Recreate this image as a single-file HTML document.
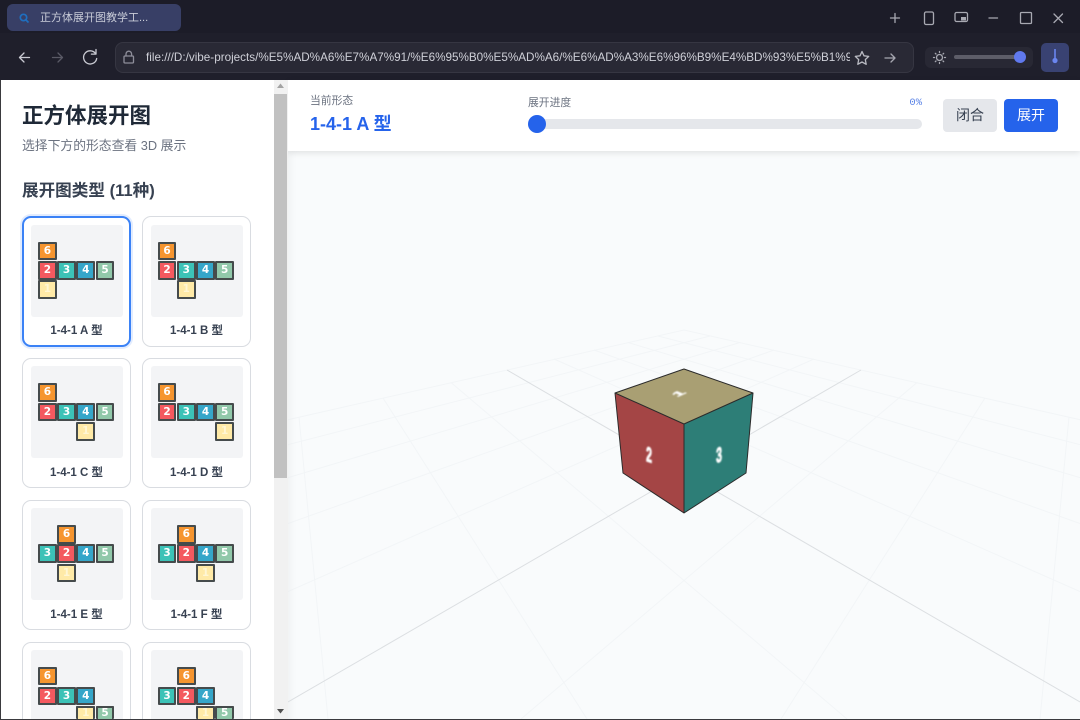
<!DOCTYPE html>
<html lang="zh">
<head>
<meta charset="utf-8">
<title>正方体展开图教学工具</title>
<style>
html,body{margin:0;padding:0;width:1080px;height:720px;overflow:hidden;background:#1c1c28;}
*{box-sizing:border-box;}
body{font-family:"Liberation Sans","Noto Sans CJK SC",sans-serif;position:relative;}
.abs{position:absolute;}
#tool{left:0;top:33px;width:1080px;height:47px;background:#1f1f2b;}
#tab{left:7px;top:4px;width:174px;height:27px;background:#383f66;border-radius:6px;}
#tabt{left:40px;top:10px;font-size:11px;line-height:16px;color:#c9ccd8;white-space:nowrap;}
#addr{left:115px;top:42px;width:799px;height:31px;background:#292935;border:1px solid #363642;border-radius:8px;}
#url{left:146px;top:50px;width:704px;height:16px;overflow:hidden;font-size:11.7px;line-height:16px;color:#cfd0d8;white-space:nowrap;}
#sl{left:925px;top:47px;width:108px;height:21px;background:#282834;border-radius:6px;}
#sltr{left:954px;top:55px;width:70px;height:4px;background:#5d5d68;border-radius:2px;}
#slth{left:1014px;top:51px;width:12px;height:12px;background:#6079ee;border-radius:50%;}
#ext{left:1041px;top:43px;width:28px;height:29px;background:#394272;border-radius:5px;}
#page{left:1px;top:80px;width:1079px;height:639px;background:#fff;overflow:hidden;}
#bar{left:274px;top:80px;width:14px;height:639px;background:#f1f1f1;}
#thumb{left:274px;top:94px;width:13px;height:384px;background:#c1c1c1;}
#cv{left:288px;top:151px;width:792px;height:568px;background:#f9fbfc;overflow:hidden;box-shadow:inset 8px 0 10px -8px rgba(0,0,0,.07);}
#top{left:288px;top:80px;width:792px;height:71px;background:#fff;box-shadow:0 2px 6px rgba(0,0,0,.10);}
h1{position:absolute;margin:0;left:22px;top:101px;font-size:21.5px;line-height:30px;font-weight:700;color:#1f2937;white-space:nowrap;}
#sub{left:22px;top:136px;font-size:12.8px;line-height:20px;color:#6b7280;white-space:nowrap;}
h2{position:absolute;margin:0;left:22px;top:179px;font-size:16.6px;line-height:24px;font-weight:700;color:#374151;white-space:nowrap;}
.card{position:absolute;width:109px;height:130px;border:1.5px solid #d9dce1;border-radius:9px;background:#fff;}
.card.on{border:2px solid #3b82f6;box-shadow:0 0 0 2px rgba(59,130,246,.15);}
.card.cut{height:77px;border-bottom:0;border-radius:9px 9px 0 0;}
.pv{position:absolute;width:92px;height:92px;background:#f3f4f6;border-radius:3px;}
.pv.cut{height:69px;border-radius:3px 3px 0 0;}
.lb{position:absolute;width:109px;text-align:center;font-size:11.5px;line-height:16px;font-weight:700;color:#374151;white-space:nowrap;}
.s{position:absolute;width:18.8px;height:18.8px;border:2px solid #454b4c;font:700 10.5px/15px "DejaVu Sans","Liberation Sans",sans-serif;color:#fff;text-align:center;border-radius:1px;overflow:hidden;}
.s.cut{height:13.2px;border-bottom:0;line-height:11px;}
.c1{background:#ffeaa7;color:#fff6d4;}
.c2{background:#f4595f;}
.c3{background:#3cc2b7;}
.c4{background:#35a6c9;}
.c5{background:#91c8aa;}
.c6{background:#f6952f;}
#cur{left:310px;top:93px;font-size:10.8px;line-height:16px;color:#6b7280;white-space:nowrap;}
#name{left:310px;top:112px;font-size:18px;line-height:24px;font-weight:700;color:#2563eb;white-space:nowrap;}
#prog{left:528px;top:95px;font-size:10.8px;line-height:16px;color:#6b7280;white-space:nowrap;}
#pct{left:902px;top:95px;width:20px;text-align:right;font-size:10.5px;line-height:16px;color:#5b84e6;font-family:"Liberation Mono",monospace;}
#tr{left:528px;top:119px;width:394px;height:10px;background:#e5e7eb;border-radius:5px;}
#kn{left:528px;top:115px;width:18px;height:18px;background:#2563eb;border-radius:50%;}
.btn{position:absolute;top:99px;width:54px;height:33px;border-radius:4px;font-size:14px;line-height:33px;text-align:center;}
#b1{left:943px;background:#e5e7eb;color:#374151;}
#b2{left:1004px;background:#2563eb;color:#fff;}
svg{position:absolute;display:block;}
</style>
</head>
<body>
<div class="abs" id="tool"></div>
<div class="abs" id="tab"></div>
<div class="abs" id="tabt">正方体展开图教学工...</div>
<div class="abs" id="addr"></div>
<div class="abs" id="url">file:///D:/vibe-projects/%E5%AD%A6%E7%A7%91/%E6%95%B0%E5%AD%A6/%E6%AD%A3%E6%96%B9%E4%BD%93%E5%B1%95%E5%BC%80%E5%9B%BE</div>
<div class="abs" id="sl"></div>
<div class="abs" id="sltr"></div>
<div class="abs" id="slth"></div>
<div class="abs" id="ext"></div>

<svg style="left:0;top:0" width="1080" height="80" viewBox="0 0 1080 80" fill="none">
  <g stroke="#1f6fc0" stroke-width="1.7"><circle cx="23.5" cy="17.5" r="3.2"/><path d="M26 20l2.5 2.5"/></g>
  <g stroke="#c9cad2" stroke-width="1.3" stroke-linecap="round" stroke-linejoin="round">
    <path d="M29.5 57.5H19.5M24 53l-4.5 4.5L24 62"/>
    <path d="M52.5 57.5H62.5M58 53l4.5 4.5L58 62" stroke="#5a5a66"/>
    <path d="M95.5 53.5a6.6 6.6 0 1 0 1.2 5"/><path d="M96 49.5v4.6h-4.6"/>
    <g stroke="#8e8e9a"><rect x="124" y="56" width="9.5" height="7" rx="1"/><path d="M126 56v-2a2.8 2.8 0 0 1 5.6 0v2"/></g>
    <path d="M862 51.5l2 4.3 4.7.6-3.4 3.2.9 4.7-4.2-2.3-4.2 2.3.9-4.7-3.4-3.2 4.7-.6z" stroke="#b9bac2"/>
    <path d="M885 58h10M891 54l4 4-4 4" stroke="#a6a7b0"/>
    <g stroke="#a6a7b0"><circle cx="939.5" cy="57.5" r="3"/><path d="M939.5 51.5v1M939.5 62.5v1M933.5 57.5h1M944.5 57.5h1M935.3 53.3l.7.7M943 61l.7.7M935.3 61.7l.7-.7M943 54l.7-.7"/></g>
    <g stroke="#a8a9b2">
      <path d="M890.5 18h9M895 13.5v9"/>
      <rect x="924.5" y="12" width="9" height="12.5" rx="1.5"/>
      <rect x="955" y="12.5" width="12.5" height="9" rx="1.5"/>
      <path d="M989 18h8.5"/>
      <rect x="1020.5" y="12.5" width="11" height="11" rx="1"/>
      <path d="M1054 14l8.5 8.5M1062.5 14l-8.5 8.5"/>
    </g>
  </g>
  <rect x="961" y="17" width="5" height="3.5" fill="#a8a9b2"/>
  <path d="M1055 49v10" stroke="#6b86f0" stroke-width="1.6"/>
  <circle cx="1055" cy="60.5" r="2.6" fill="#6b86f0"/>
</svg>

<div class="abs" id="page"></div>
<div class="abs" id="cv">
  <svg style="left:0;top:0" width="792" height="568" viewBox="288 151 792 568" fill="none">
    <g stroke="#e4e8ec" stroke-width="1" opacity=".3">
      <path d="M684 330L1080 419.7M658 336L1080 444.6M628 342.5L1080 477.7M594 350L1080 523.5M554 359L1080 591.6M451 382.5L847 719M383 398L587 719M299 417L328 719"/>
      <path d="M684 330L288 419.7M710 336L288 444.6M740 342.5L288 477.7M774 350L288 523.5M814 359L288 591.6M917 382.5L521 719M985 398L781 719M1069 417L1040 719"/>
    </g>
    <path d="M507 370L1080 702M861 370L288 702" stroke="#dcdfe2" stroke-width="1"/>
    <polygon points="684,369 753,393 684,424 615,393" fill="#a99f73"/>
    <polygon points="615,393 684,424 684,513 623,473" fill="#a44545"/>
    <polygon points="753,393 684,424 684,513 746,473" fill="#2d7e77"/>
    <path d="M684 369L753 393L746 473L684 513L623 473L615 393ZM615 393L684 424L753 393M684 424V513" stroke="#2b2b2b" stroke-width="1" stroke-linejoin="round"/>
    <g fill="#fff" stroke="#fff" stroke-width=".7" font-family="Liberation Sans, sans-serif" font-weight="700" font-size="14" text-anchor="middle" style="filter:blur(.8px)">
      <text transform="matrix(1.2 -.55 .7 .3 682 395)">1</text>
      <text transform="matrix(.75 .25 0 1.5 649 462)">2</text>
      <text transform="matrix(.75 -.25 0 1.5 719 462)">3</text>
    </g>
  </svg>
</div>
<div class="abs" id="top"></div>
<div class="abs" id="cur">当前形态</div>
<div class="abs" id="name">1-4-1 A 型</div>
<div class="abs" id="prog">展开进度</div>
<div class="abs" id="pct">0%</div>
<div class="abs" id="tr"></div>
<div class="abs" id="kn"></div>
<div class="btn" id="b1">闭合</div>
<div class="btn" id="b2">展开</div>

<div class="abs" id="bar"></div>
<div class="abs" id="thumb"></div>
<svg style="left:274px;top:80px" width="14" height="639" viewBox="0 0 14 639">
  <path d="M6.5 3.5L10 8H3z" fill="#a3a3a3"/>
  <path d="M3 629h7l-3.5 4.5z" fill="#505050"/>
</svg>

<h1>正方体展开图</h1>
<div class="abs" id="sub">选择下方的形态查看 3D 展示</div>
<h2>展开图类型 (11种)</h2>

<div style="position:absolute;left:0;top:0;width:274px;height:719px;overflow:hidden">
  <div class="card on" style="left:22px;top:216px;height:131px"></div>
  <div class="pv" style="left:31px;top:225px"></div>
  <div class="lb" style="left:22px;top:323px">1-4-1 A 型</div>
  <b class="s c6" style="left:38px;top:241.7px">6</b><b class="s c2" style="left:38px;top:261px">2</b><b class="s c3" style="left:57.2px;top:261px">3</b><b class="s c4" style="left:76.4px;top:261px">4</b><b class="s c5" style="left:95.6px;top:261px">5</b><b class="s c1" style="left:38px;top:280.3px">1</b>

  <div class="card" style="left:142px;top:216px;height:131px"></div>
  <div class="pv" style="left:151px;top:225px"></div>
  <div class="lb" style="left:142px;top:323px">1-4-1 B 型</div>
  <b class="s c6" style="left:157.7px;top:241.7px">6</b><b class="s c2" style="left:157.7px;top:261px">2</b><b class="s c3" style="left:176.9px;top:261px">3</b><b class="s c4" style="left:196.1px;top:261px">4</b><b class="s c5" style="left:215.3px;top:261px">5</b><b class="s c1" style="left:176.9px;top:280.3px">1</b>

  <div class="card" style="left:22px;top:358px"></div>
  <div class="pv" style="left:31px;top:366px"></div>
  <div class="lb" style="left:22px;top:465px">1-4-1 C 型</div>
  <b class="s c6" style="left:38px;top:383.3px">6</b><b class="s c2" style="left:38px;top:402.6px">2</b><b class="s c3" style="left:57.2px;top:402.6px">3</b><b class="s c4" style="left:76.4px;top:402.6px">4</b><b class="s c5" style="left:95.6px;top:402.6px">5</b><b class="s c1" style="left:76.4px;top:421.9px">1</b>

  <div class="card" style="left:142px;top:358px"></div>
  <div class="pv" style="left:151px;top:366px"></div>
  <div class="lb" style="left:142px;top:465px">1-4-1 D 型</div>
  <b class="s c6" style="left:157.7px;top:383.3px">6</b><b class="s c2" style="left:157.7px;top:402.6px">2</b><b class="s c3" style="left:176.9px;top:402.6px">3</b><b class="s c4" style="left:196.1px;top:402.6px">4</b><b class="s c5" style="left:215.3px;top:402.6px">5</b><b class="s c1" style="left:215.3px;top:421.9px">1</b>

  <div class="card" style="left:22px;top:500px"></div>
  <div class="pv" style="left:31px;top:508px"></div>
  <div class="lb" style="left:22px;top:607px">1-4-1 E 型</div>
  <b class="s c6" style="left:57.2px;top:525px">6</b><b class="s c3" style="left:38px;top:544.3px">3</b><b class="s c2" style="left:57.2px;top:544.3px">2</b><b class="s c4" style="left:76.4px;top:544.3px">4</b><b class="s c5" style="left:95.6px;top:544.3px">5</b><b class="s c1" style="left:57.2px;top:563.6px">1</b>

  <div class="card" style="left:142px;top:500px"></div>
  <div class="pv" style="left:151px;top:508px"></div>
  <div class="lb" style="left:142px;top:607px">1-4-1 F 型</div>
  <b class="s c6" style="left:176.9px;top:525px">6</b><b class="s c3" style="left:157.7px;top:544.3px">3</b><b class="s c2" style="left:176.9px;top:544.3px">2</b><b class="s c4" style="left:196.1px;top:544.3px">4</b><b class="s c5" style="left:215.3px;top:544.3px">5</b><b class="s c1" style="left:196.1px;top:563.6px">1</b>

  <div class="card cut" style="left:22px;top:642px"></div>
  <div class="pv cut" style="left:31px;top:650px"></div>
  <b class="s c6" style="left:38px;top:666.7px">6</b><b class="s c2" style="left:38px;top:686.7px">2</b><b class="s c3" style="left:57.2px;top:686.7px">3</b><b class="s c4" style="left:76.4px;top:686.7px">4</b><b class="s c1 cut" style="left:76.4px;top:705.8px">1</b><b class="s c5 cut" style="left:95.6px;top:705.8px">5</b>

  <div class="card cut" style="left:142px;top:642px"></div>
  <div class="pv cut" style="left:151px;top:650px"></div>
  <b class="s c6" style="left:176.9px;top:666.7px">6</b><b class="s c3" style="left:157.7px;top:686.7px">3</b><b class="s c2" style="left:176.9px;top:686.7px">2</b><b class="s c4" style="left:196.1px;top:686.7px">4</b><b class="s c1 cut" style="left:196.1px;top:705.8px">1</b><b class="s c5 cut" style="left:215.3px;top:705.8px">5</b>
</div>

<div class="abs" style="left:0;top:719px;width:1080px;height:1px;background:#3a3a3e"></div>
<div class="abs" style="left:0;top:80px;width:1px;height:639px;background:#3a3a3e"></div>
</body>
</html>
